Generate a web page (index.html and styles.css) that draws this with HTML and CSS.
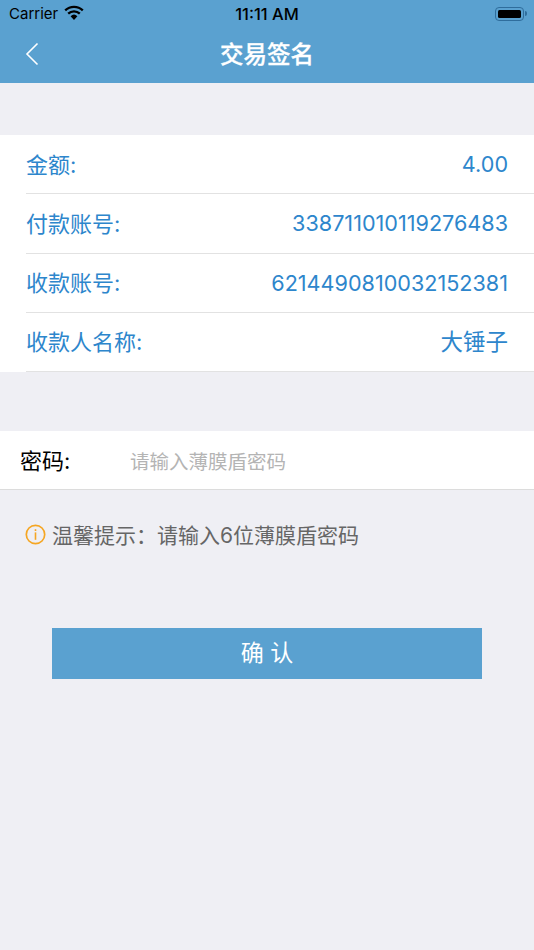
FILE: index.html
```html
<!DOCTYPE html>
<html lang="zh-CN">

<head>
    <meta charset="UTF-8">
    <meta name="viewport" content="width=device-width, initial-scale=1.0">
    <title>交易签名</title>
    <link rel="stylesheet" href="styles.css">
</head>

<body>
    <div class="header">
        <div class="status-bar">
            <div class="status-left">
                <span>Carrier</span>
                <svg class="wifi" width="20" height="15" viewBox="0 0 20 15">
                    <path d="M10 15 L6.6 11.2 A5 5 0 0 1 13.4 11.2 Z" fill="#000" />
                    <path d="M4.2 8.6 A8.4 8.4 0 0 1 15.8 8.6" fill="none" stroke="#000" stroke-width="2.3" />
                    <path d="M1.2 5.3 A12.8 12.8 0 0 1 18.8 5.3" fill="none" stroke="#000" stroke-width="2.3" />
                </svg>
            </div>
            <div class="status-time">11:11 AM</div>
            <div class="battery">
                <div class="battery-body"><div class="battery-level"></div></div>
                <div class="battery-tip"></div>
            </div>
        </div>
        <div class="nav-bar">
            <svg class="back" width="14" height="24" viewBox="0 0 14 24">
                <path d="M12.5 1.5 L2 12 L12.5 22.5" fill="none" stroke="#fff" stroke-width="1.6" />
            </svg>
            <h1>交易签名</h1>
        </div>
    </div>

    <div class="info-card">
        <div class="info-row"><span class="cjk">金额:</span><span class="value">4.00</span></div>
        <div class="info-row"><span class="cjk">付款账号:</span><span class="value">338711010119276483</span></div>
        <div class="info-row"><span class="cjk">收款账号:</span><span class="value">6214490810032152381</span></div>
        <div class="info-row"><span class="cjk">收款人名称:</span><span class="cjk value-name">大锤子</span></div>
    </div>

    <div class="password-row">
        <span class="password-label">密码:</span>
        <span class="password-input">请输入薄膜盾密码</span>
    </div>

    <div class="tip">
        <svg width="21" height="21" viewBox="0 0 21 21">
            <circle cx="10.5" cy="10.5" r="9.2" fill="none" stroke="#f5a623" stroke-width="1.7" />
            <rect x="9.7" y="5.2" width="1.6" height="1.8" fill="#f5a623" />
            <rect x="9.7" y="8.4" width="1.6" height="7.4" fill="#f5a623" />
        </svg>
        <span class="tip-text">温馨提示：请输入6位薄膜盾密码</span>
    </div>

    <button class="confirm-button"><span class="confirm-text">确 认</span></button>
</body>

</html>
```

FILE: styles.css
```css
body {
    font-family: Inter, "Noto Sans CJK SC", sans-serif;
    margin: 0;
    padding: 0;
    background-color: #efeff4;
    width: 534px;
    height: 950px;
    overflow: hidden;
}

.header {
    background-color: #5aa1d0;
    height: 83px;
}

.status-bar {
    height: 27px;
    display: flex;
    align-items: center;
    justify-content: space-between;
    padding: 0 7px 0 9px;
    font-size: 15px;
    color: #000;
}

.status-left {
    display: flex;
    align-items: center;
    gap: 6px;
    width: 160px;
}

.wifi {
    margin-top: -3px;
}

.status-time {
    font-size: 16.5px;
    font-weight: 500;
    margin-right: 2px;
}

.battery {
    display: flex;
    align-items: center;
    justify-content: flex-end;
    width: 160px;
}

.battery-body {
    width: 29px;
    height: 14px;
    border: 1px solid #2f6d9c;
    border-radius: 4px;
    padding: 2px;
    box-sizing: border-box;
}

.battery-level {
    height: 100%;
    background: #000;
    border-radius: 1.5px;
}

.battery-tip {
    width: 2px;
    height: 5px;
    margin-left: 1px;
    background: #2f6d9c;
    border-radius: 0 2px 2px 0;
}

.nav-bar {
    height: 56px;
    position: relative;
    display: flex;
    align-items: center;
    justify-content: center;
}

.nav-bar h1 {
    margin: 0 0 5px;
    color: white;
    font-size: 23.5px;
    font-weight: 500;
    -webkit-text-stroke: 0.3px white;
}

.back {
    position: absolute;
    left: 25px;
    top: 15px;
}

.info-card {
    background: white;
    margin-top: 52px;
}

.info-row {
    height: 59.25px;
    box-sizing: border-box;
    margin-left: 26px;
    padding-right: 26px;
    display: flex;
    align-items: center;
    justify-content: space-between;
    border-bottom: 1px solid #e2e2e2;
    color: #2d86cc;
    font-size: 22px;
}

.cjk {
    margin-bottom: 3px;
}

.value {
    font-size: 21.6px;
}

.value-name {
    font-size: 22.5px;
}

.password-row {
    background: white;
    margin-top: 59px;
    height: 58.5px;
    box-sizing: border-box;
    display: flex;
    align-items: center;
    border-bottom: 1px solid #dcdcdc;
    padding-left: 20px;
}

.password-label {
    width: 110px;
    font-size: 22px;
    color: #000;
    margin-bottom: 2px;
}

.password-input {
    font-size: 19.5px;
    color: #b4b4b4;
    margin-top: 1px;
}

.tip {
    margin-top: 29.5px;
    padding-left: 25px;
    display: flex;
    align-items: center;
    gap: 6px;
    font-size: 21px;
    color: #666;
}

.tip-text {
    margin-bottom: 1px;
}

.confirm-button {
    display: block;
    width: 430px;
    height: 51px;
    margin: 77.5px 0 0 52px;
    padding: 0 0 5px;
    background-color: #5aa1d0;
    color: white;
    border: none;
    font-family: inherit;
    font-size: 23px;
}
```
